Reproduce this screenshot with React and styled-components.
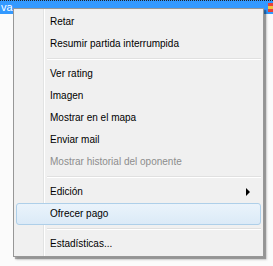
import React from 'react';
import styled, { createGlobalStyle } from 'styled-components';

const GlobalStyle = createGlobalStyle`
  html, body {
    margin: 0;
    padding: 0;
    background: #ffffff;
  }
  body {
    font-family: "Liberation Sans", Arial, sans-serif;
  }
`;

const Page = styled.div`
  position: relative;
  width: 273px;
  height: 266px;
  overflow: hidden;
  background: #fbfbfb;
`;

const TitleBar = styled.div`
  height: 14px;
  background: #3399ff;
  border-top: 1px dotted #222;
  box-sizing: border-box;
  display: flex;
  align-items: center;
  justify-content: space-between;
  color: #fff;
  font-size: 11px;
  line-height: 13px;
  padding-left: 1px;
`;

const Flag = styled.div`
  width: 5px;
  height: 9px;
  background: linear-gradient(#e8403a 0 30%, #f3c63c 30% 70%, #e8403a 70%);
`;

const Menu = styled.div`
  position: absolute;
  top: 8px;
  left: 13px;
  width: 251px;
  box-sizing: border-box;
  border: 1px solid #979797;
  background: #f0f0f0;
  padding: 2px 2px 1px 2px;
  box-shadow: 2px 2px 1px rgba(0, 0, 0, 0.3), 3px 3px 2px rgba(0, 0, 0, 0.15);
  font-size: 10px;
  background-image: linear-gradient(
    to right,
    transparent 29px,
    #e2e3e3 29px,
    #e2e3e3 30px,
    #ffffff 30px,
    #ffffff 31px,
    transparent 31px
  );
`;

const Item = styled.div`
  position: relative;
  height: 22px;
  display: flex;
  align-items: center;
  padding-left: 33px;
  box-sizing: border-box;
  color: ${(p) => (p.disabled ? '#8d8d8d' : '#000')};
  border: 1px solid ${(p) => (p.active ? '#aecfe9' : 'transparent')};
  border-radius: 3px;
  background: ${(p) =>
    p.active ? 'linear-gradient(#eaf3fb, #dbeaf7)' : 'transparent'};
  white-space: nowrap;
`;

const Label = styled.span`
  flex: 1;
  line-height: 20px;
`;

const Arrow = styled.span`
  width: 0;
  height: 0;
  border-top: 4px solid transparent;
  border-bottom: 4px solid transparent;
  border-left: 4px solid #000;
  margin-right: 10px;
`;

const Separator = styled.div`
  height: 8px;
  display: flex;
  flex-direction: column;
  justify-content: center;
  padding-left: 31px;
  &::before {
    content: '';
    display: block;
    height: 1px;
    background: #e0e0e0;
  }
  &::after {
    content: '';
    display: block;
    height: 1px;
    background: #ffffff;
  }
`;

const groups = [
  [{ label: 'Retar' }, { label: 'Resumir partida interrumpida' }],
  [
    { label: 'Ver rating' },
    { label: 'Imagen' },
    { label: 'Mostrar en el mapa' },
    { label: 'Enviar mail' },
    { label: 'Mostrar historial del oponente', disabled: true },
  ],
  [{ label: 'Edición', submenu: true }, { label: 'Ofrecer pago', active: true }],
  [{ label: 'Estadísticas...' }],
];

export default function App() {
  return (
    <Page>
      <GlobalStyle />
      <TitleBar>
        <span>va</span>
        <Flag />
      </TitleBar>
      <Menu>
        {groups.map((group, gi) => (
          <React.Fragment key={gi}>
            {gi > 0 && <Separator />}
            {group.map((it) => (
              <Item key={it.label} disabled={it.disabled} active={it.active}>
                <Label>{it.label}</Label>
                {it.submenu && <Arrow />}
              </Item>
            ))}
          </React.Fragment>
        ))}
      </Menu>
    </Page>
  );
}
